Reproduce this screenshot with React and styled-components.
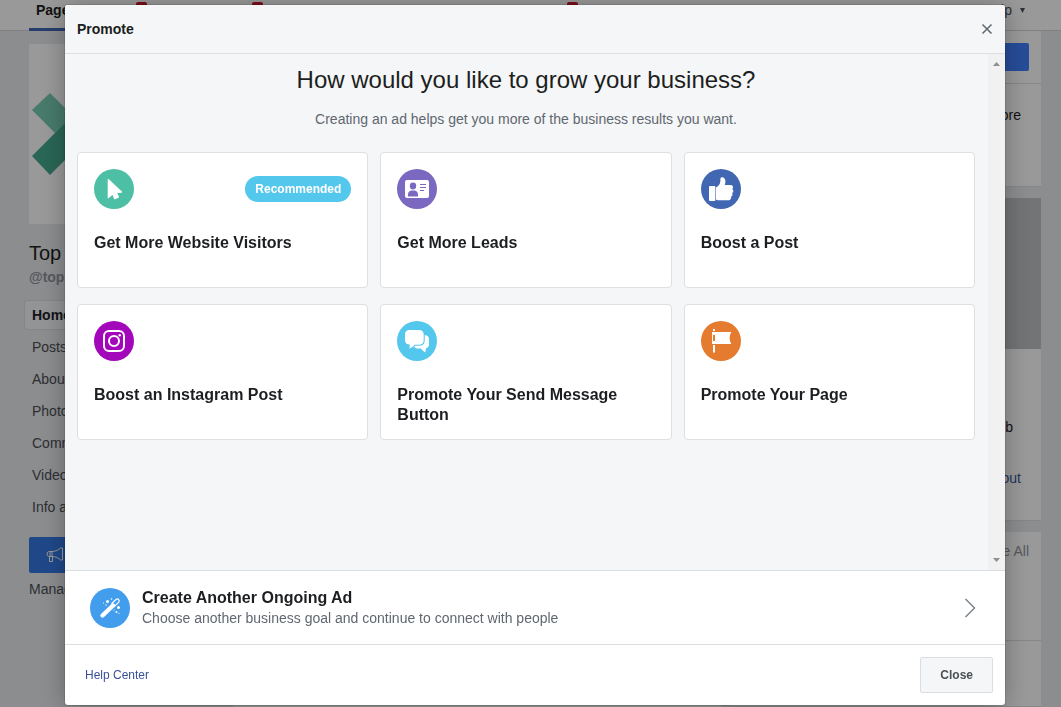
import React, { Fragment } from 'react';
import styled, { createGlobalStyle } from 'styled-components';

const GlobalStyle = createGlobalStyle`
  * {
    box-sizing: border-box;
  }

  body {
    margin: 0;
    overflow: hidden;
    background: #e9ebee;
    color: #1c1e21;
    font-family: "Liberation Sans", Arial, sans-serif;
    font-size: 14px;
    line-height: 20px;
  }

  h1, h2, h3, p, ul {
    margin: 0;
    padding: 0;
  }

  button {
    font-family: inherit;
    cursor: pointer;
  }
`

/* Page behind the dialog */

const Page = styled.div`
  height: 100vh;
  display: flex;
  flex-direction: column;
  overflow: hidden;
`

const NavBar = styled.nav`
  display: flex;
  flex: none;
  height: 31px;
  padding: 0 20px 0 29px;
  background: #fff;
  border-bottom: 1px solid #d3d6db;
`

const NavTab = styled.a`
  position: relative;
  display: block;
  width: ${props => props.$width}px;
  height: 31px;
  padding: 0 7px;
  border-bottom: 3px solid ${props => (props.$active ? '#4267b2' : 'transparent')};
  color: inherit;
  font-weight: ${props => (props.$active ? 'bold' : 'normal')};
  text-decoration: none;
  white-space: nowrap;
`

const NavBadge = styled.span`
  position: absolute;
  top: 2px;
  right: 0;
  width: 11px;
  height: 12px;
  border-radius: 2px;
  background: #d0182f;
`

const HelpMenu = styled.a`
  display: flex;
  align-items: center;
  gap: 8px;
  height: 20px;
  margin-left: auto;
  padding-right: 16px;
  color: #4b4f56;
  text-decoration: none;
`

const Columns = styled.div`
  display: flex;
  flex: 1;
  gap: 12px;
  min-height: 0;
  padding: 0 20px 0 29px;
`

const SideColumn = styled.aside`
  flex: none;
  width: 192px;
  padding-top: 13px;
`

const ProfilePicture = styled.div`
  width: 180px;
  height: 180px;
  background: #fff;

  svg {
    display: block;
  }
`

const PageName = styled.h2`
  margin-top: 17px;
  font-size: 20px;
  font-weight: normal;
  line-height: 24px;
`

const PageHandle = styled.p`
  margin-top: 2px;
  color: #90949c;
  font-weight: bold;
`

const SideMenu = styled.ul`
  margin: 14px 0 0 -4px;
  list-style: none;
`

const SideLink = styled.a`
  display: block;
  height: 28px;
  margin-bottom: 4px;
  padding: 4px 7px;
  border-radius: 2px;
  background: ${props => (props.$active ? '#f6f7f9' : 'transparent')};
  box-shadow: ${props => (props.$active ? '0 0 0 1px #dddfe2' : 'none')};
  color: ${props => (props.$active ? '#1d2129' : '#4b4f56')};
  font-weight: ${props => (props.$active ? 'bold' : 'normal')};
  text-decoration: none;
`

const PromoteButton = styled.button`
  display: flex;
  align-items: center;
  gap: 8px;
  width: 180px;
  height: 36px;
  margin-top: 16px;
  padding: 0 16px;
  border: 0;
  border-radius: 2px;
  background: #3578e5;
  color: #fff;
  font-size: 14px;
  font-weight: bold;
`

const ManageLink = styled.p`
  margin-top: 6px;
  color: #4b4f56;
`

const Feed = styled.main`
  flex: 1;
  background: #fff;
`

const RightColumn = styled.aside`
  display: flex;
  flex: none;
  flex-direction: column;
  gap: 11px;
  width: 308px;
  text-align: right;
`

const Panel = styled.section`
  flex: ${props => (props.$fill ? '1' : 'none')};
  background: #fff;
  border-bottom: 1px solid #dddfe2;
`

const PanelHead = styled.div`
  display: flex;
  justify-content: flex-end;
  height: ${props => props.$height}px;
  padding: ${props => (props.$tight ? '9px' : '12px')} 12px;
  border-bottom: 1px solid #dddfe2;
  color: #90949c;
`

const PanelButton = styled.button`
  width: 120px;
  height: 28px;
  border: 0;
  border-radius: 2px;
  background: #4080ff;
`

const PanelBody = styled.div`
  height: ${props => props.$height}px;
  padding: ${props => (props.$flush ? '17px' : '21px')} 20px 0;
`

const MapPhoto = styled.div`
  height: 151px;
  background: #bfc1c4;
`

const PanelLine = styled.p`
  height: 51px;
  padding-right: ${props => (props.$inset ? '8px' : '0')};
  color: ${props => (props.$link ? '#385898' : '#1d2129')};
`

/* Dialog */

const Overlay = styled.div`
  position: fixed;
  inset: 0;
  display: flex;
  padding: 5px 56px 2px 65px;
  background: rgba(0, 0, 0, 0.4);
`

const Dialog = styled.div`
  display: flex;
  flex: 1;
  flex-direction: column;
  min-width: 0;
  overflow: hidden;
  border-radius: 3px;
  background: #fff;
  box-shadow: 0 2px 26px rgba(0, 0, 0, 0.3), 0 0 0 1px rgba(0, 0, 0, 0.1);
`

const DialogHeader = styled.header`
  display: flex;
  flex: none;
  align-items: center;
  justify-content: space-between;
  height: 49px;
  padding: 0 12px;
  border-bottom: 1px solid #dddfe2;
  background: #f5f6f7;
`

const DialogTitle = styled.h1`
  font-size: 14px;
  line-height: 20px;
`

const IconButton = styled.button`
  display: flex;
  padding: 0;
  border: 0;
  background: none;
  color: #606770;
`

const DialogBody = styled.div`
  display: flex;
  flex: 1;
  min-height: 0;
  background: #f5f6f7;
`

const DialogContent = styled.div`
  flex: 1;
  min-width: 0;
  padding: 12px 13px 12px 12px;
  text-align: center;
`

const Question = styled.h2`
  font-size: 24px;
  font-weight: normal;
  line-height: 28px;
`

const Hint = styled.p`
  margin: 16px 0 24px;
  color: #606770;
  line-height: 18px;
`

const Goals = styled.div`
  display: grid;
  grid-template-columns: repeat(3, 1fr);
  grid-auto-rows: 136px;
  gap: 16px 12px;
`

const GoalCard = styled.button`
  display: flex;
  flex-direction: column;
  padding: 16px;
  border: 1px solid #dddfe2;
  border-radius: 4px;
  background: #fff;
  color: #1c1e21;
  text-align: left;
`

const GoalTop = styled.span`
  display: flex;
  align-items: center;
  justify-content: space-between;
  width: 100%;
  margin-bottom: 24px;
`

const GoalTitle = styled.span`
  color: #1c1e21;
  font-size: 16px;
  font-weight: bold;
  line-height: 20px;
`

const Recommended = styled.span`
  padding: 0 10px;
  border-radius: 13px;
  background: #54c7ec;
  color: #fff;
  font-size: 12px;
  font-weight: bold;
  line-height: 26px;
`

const ScrollTrack = styled.div`
  display: flex;
  flex: none;
  flex-direction: column;
  align-items: center;
  justify-content: space-between;
  width: 17px;
  padding: 8px 0;
  background: #f1f1f1;
`

const OngoingAd = styled.button`
  display: flex;
  flex: none;
  align-items: center;
  gap: 12px;
  height: 75px;
  padding: 0 29px 0 25px;
  border: 0;
  border-top: 1px solid #dadde1;
  border-bottom: 1px solid #dadde1;
  background: #fff;
  text-align: left;
`

const OngoingText = styled.span`
  display: flex;
  flex: 1;
  flex-direction: column;
  color: #606770;
  font-size: 14px;
  line-height: 20px;
`

const DialogFooter = styled.footer`
  display: flex;
  flex: none;
  align-items: center;
  justify-content: space-between;
  height: 60px;
  padding: 0 12px 0 20px;
`

const HelpLink = styled.a`
  color: #385098;
  font-size: 12px;
  text-decoration: none;
`

const CloseButton = styled.button`
  height: 36px;
  padding: 0 19px;
  border: 1px solid #dadde1;
  border-radius: 2px;
  background: #f5f6f7;
  color: #4b4f56;
  font-size: 12px;
  font-weight: bold;
`

const Disc = ({ color, children }) => (
  <svg width='40' height='40' viewBox='0 0 40 40' fill='none' aria-hidden='true'>
    <circle cx='20' cy='20' r='20' fill={color} />
    {children}
  </svg>
)

const CursorIcon = () => (
  <Disc color='#4dbfa5'>
    <path d='M14.4 10.8 27.4 23l-5.2.5 2.1 4.600-3.500 1.500-2.100-4.800-4.300 3.700z' fill='#fff' stroke='#fff' strokeWidth='1.4' strokeLinejoin='round' />
  </Disc>
)

const LeadsIcon = () => (
  <Disc color='#7b68c0'>
    <rect x='8' y='11' width='24' height='18' rx='2' fill='#fff' />
    <ellipse cx='16' cy='17' rx='3.2' ry='3.4' fill='#7b68c0' />
    <path d='M11 27.6v-2c0-2.600 1.500-3.800 3.200-4.200h3.600c1.700.4 3.200 1.600 3.200 4.200v2z' fill='#7b68c0' />
    <path d='M23 15.500h6M23 18.500h6M23 21.500h4' stroke='#7b68c0' strokeWidth='1' />
  </Disc>
)

const LikeIcon = () => (
  <Disc color='#4267b2'>
    <rect x='8' y='17' width='6.400' height='15' rx='1' fill='#fff' />
    <path d='M15 18.600c2.600-1.600 4.400-4 4.400-6.600V10c0-1.400 1-2 2.100-1.700 1.900.5 2.900 2.100 2.900 4.100 0 1.300-.3 2.500-.7 3.600h5.800c1.500 0 2.500.9 2.500 2.200 0 .8-.3 1.400-.8 1.800.8.5 1.100 1.200 1.100 2 0 .9-.5 1.700-1.200 2.100.4.400.5 1 .4 1.600-.1.900-.7 1.600-1.400 1.900.1.300.1.700.1 1.100-.2 1.600-1.500 2.600-3.400 2.600h-8c-1.600 0-2.900-.3-3.800-.9z' fill='#fff' />
  </Disc>
)

const InstagramIcon = () => (
  <Disc color='#a307ba'>
    <rect x='10' y='10' width='20' height='20' rx='5' stroke='#fff' strokeWidth='2' />
    <circle cx='20' cy='20' r='5' stroke='#fff' strokeWidth='2' />
    <circle cx='25.700' cy='14.300' r='1.200' fill='#fff' />
  </Disc>
)

const MessageIcon = () => (
  <Disc color='#54c7ec'>
    <path d='M27 14c3 0 5 1.500 5 4v5.400c0 1.900-1.100 3.300-2.900 3.800-.5 1.300-.6 2.700-.6 4.300-1.900-.9-3.300-2.200-4.500-4h-2.500c-2.400 0-3.800-.7-4.500-2.300l5.500-3z' fill='#fff' />
    <path d='M12.500 9H22c3 0 4.700 1.700 4.700 4.400v5.800c0 2.800-1.700 4.500-4.700 4.500h-4.400c-1.200 1.700-2.800 2.900-5.300 3.700.4-1.300.5-2.500.4-3.800-2.900-.1-4.700-1.700-4.700-4.400v-5.800C8 10.700 9.600 9 12.500 9z' fill='#fff' stroke='#54c7ec' strokeWidth='2' paintOrder='stroke' />
  </Disc>
)

const FlagIcon = () => (
  <Disc color='#e57b2e'>
    <path d='M12 8h2v2h-2zM12 24h2v7.500h-2zM11 11h19.300c-2.300 4-2.300 8 0 12H11v-2h4v-8h-4z' fill='#fff' />
    <path d='M11.500 13.500h3v7h-3z' fill='#e57b2e' stroke='#fff' strokeWidth='1' />
  </Disc>
)

const WandIcon = () => (
  <Disc color='#429ded'>
    <path d='M12.500 27.500 23 17.500' stroke='#fff' strokeWidth='4.400' strokeLinecap='round' />
    <path d='m21.500 15.800 4.600-4.300c1.800-1.500 4.300 1.200 2.500 2.900L24 18.700' stroke='#fff' strokeWidth='1.200' />
    <g fill='#fff'>
      <circle cx='17.500' cy='13.500' r='1.500' />
      <circle cx='21.500' cy='11' r='.8' />
      <circle cx='13.500' cy='15' r='.6' />
      <circle cx='16' cy='17' r='.7' />
      <circle cx='28.500' cy='19.500' r='1.500' />
      <circle cx='26.500' cy='24' r='1' />
      <circle cx='24' cy='22' r='.6' />
      <circle cx='29' cy='25.500' r='.6' />
    </g>
  </Disc>
)

const Arrow = ({ down }) => (
  <svg width='7' height='4' viewBox='0 0 7 4' aria-hidden='true'>
    <path d={down ? 'M0 0h7L3.500 4z' : 'M0 4h7L3.500 0z'} fill='#8f8f8f' />
  </svg>
)

const TABS = [
  { id: 'page', label: 'Page', width: 48, active: true },
  { id: 'inbox', width: 70 },
  { id: 'notifications', width: 116 },
  { id: 'ads', width: 315 },
]

const MENU = ['Home', 'Posts', 'About', 'Photos', 'Community', 'Videos', 'Info and Ads']

const GOALS = [
  { title: 'Get More Website Visitors', Icon: CursorIcon, recommended: true },
  { title: 'Get More Leads', Icon: LeadsIcon },
  { title: 'Boost a Post', Icon: LikeIcon },
  { title: 'Boost an Instagram Post', Icon: InstagramIcon },
  { title: 'Promote Your Send Message Button', Icon: MessageIcon },
  { title: 'Promote Your Page', Icon: FlagIcon },
]

const BusinessPage = () => (
  <Page>
    <NavBar>
      {TABS.map(tab => (
        <NavTab key={tab.id} href='#' aria-label={tab.id} $width={tab.width} $active={tab.active}>
          {tab.label || <NavBadge />}
        </NavTab>
      ))}
      <HelpMenu href='#'>
        Help
        <svg width='5' height='5' viewBox='0 0 5 5' aria-hidden='true'>
          <path d='M0 0h5L2.500 5z' fill='#4b4f56' />
        </svg>
      </HelpMenu>
    </NavBar>
    <Columns>
      <SideColumn>
        <ProfilePicture>
          <svg width='180' height='180' viewBox='0 0 180 180' aria-hidden='true'>
            <path d='M21 49 3 66l23 23 18-17z' fill='#77cdb3' />
            <path d='M45 70 3 112l18 19 42-42z' fill='#45ab8e' />
          </svg>
        </ProfilePicture>
        <PageName>Top</PageName>
        <PageHandle>@top</PageHandle>
        <SideMenu>
          {MENU.map((item, index) => (
            <li key={item}>
              <SideLink href='#' $active={index === 0}>{item}</SideLink>
            </li>
          ))}
        </SideMenu>
        <PromoteButton>
          <svg width='20' height='20' viewBox='0 0 20 20' fill='none' stroke='#fff' aria-hidden='true'>
            <path d='M7 6.500H4.500c-1.500 0-2.500 1-2.500 2.500s1 2.500 2.500 2.500H7zM7 6.500c3.500 0 6.500-1.500 8.500-3.500h2v12h-2c-2-2-5-3.500-8.500-3.500M4.500 11.500v5h3v-5M5 6.500v5' />
          </svg>
          Promote
        </PromoteButton>
        <ManageLink>Manage Promotions</ManageLink>
      </SideColumn>
      <Feed />
      <RightColumn>
        <Panel>
          <PanelHead $height={53}>
            <PanelButton aria-label='Send Message' />
          </PanelHead>
          <PanelBody $height={102}>More</PanelBody>
        </Panel>
        <Panel>
          <MapPhoto />
          <PanelBody $height={171} $flush>
            <PanelLine />
            <PanelLine $inset>Web</PanelLine>
            <PanelLine $link>About</PanelLine>
          </PanelBody>
        </Panel>
        <Panel $fill>
          <PanelHead $height={109} $tight>See All</PanelHead>
        </Panel>
      </RightColumn>
    </Columns>
  </Page>
)

const PromoteDialog = () => (
  <Overlay>
    <Dialog role='dialog' aria-labelledby='promote-title'>
      <DialogHeader>
        <DialogTitle id='promote-title'>Promote</DialogTitle>
        <IconButton aria-label='Dismiss'>
          <svg width='12' height='12' viewBox='0 0 12 12' fill='none' stroke='currentColor' strokeWidth='1.500'>
            <path d='m1.500 1.500 9 9M10.500 1.500l-9 9' />
          </svg>
        </IconButton>
      </DialogHeader>
      <DialogBody>
        <DialogContent>
          <Question>How would you like to grow your business?</Question>
          <Hint>Creating an ad helps get you more of the business results you want.</Hint>
          <Goals>
            {GOALS.map(({ title, Icon, recommended }) => (
              <GoalCard key={title}>
                <GoalTop>
                  <Icon />
                  {recommended && <Recommended>Recommended</Recommended>}
                </GoalTop>
                <GoalTitle>{title}</GoalTitle>
              </GoalCard>
            ))}
          </Goals>
        </DialogContent>
        <ScrollTrack>
          <Arrow />
          <Arrow down />
        </ScrollTrack>
      </DialogBody>
      <OngoingAd>
        <WandIcon />
        <OngoingText>
          <GoalTitle>Create Another Ongoing Ad</GoalTitle>
          Choose another business goal and continue to connect with people
        </OngoingText>
        <svg width='12' height='20' viewBox='0 0 12 20' fill='none' stroke='#7f858d' strokeWidth='1.500' aria-hidden='true'>
          <path d='m1.500 1 9 9-9 9' />
        </svg>
      </OngoingAd>
      <DialogFooter>
        <HelpLink href='#'>Help Center</HelpLink>
        <CloseButton>Close</CloseButton>
      </DialogFooter>
    </Dialog>
  </Overlay>
)

const App = () => {
  return (
    <Fragment>
      <GlobalStyle />
      <BusinessPage />
      <PromoteDialog />
    </Fragment>
  );
}

export default App;
